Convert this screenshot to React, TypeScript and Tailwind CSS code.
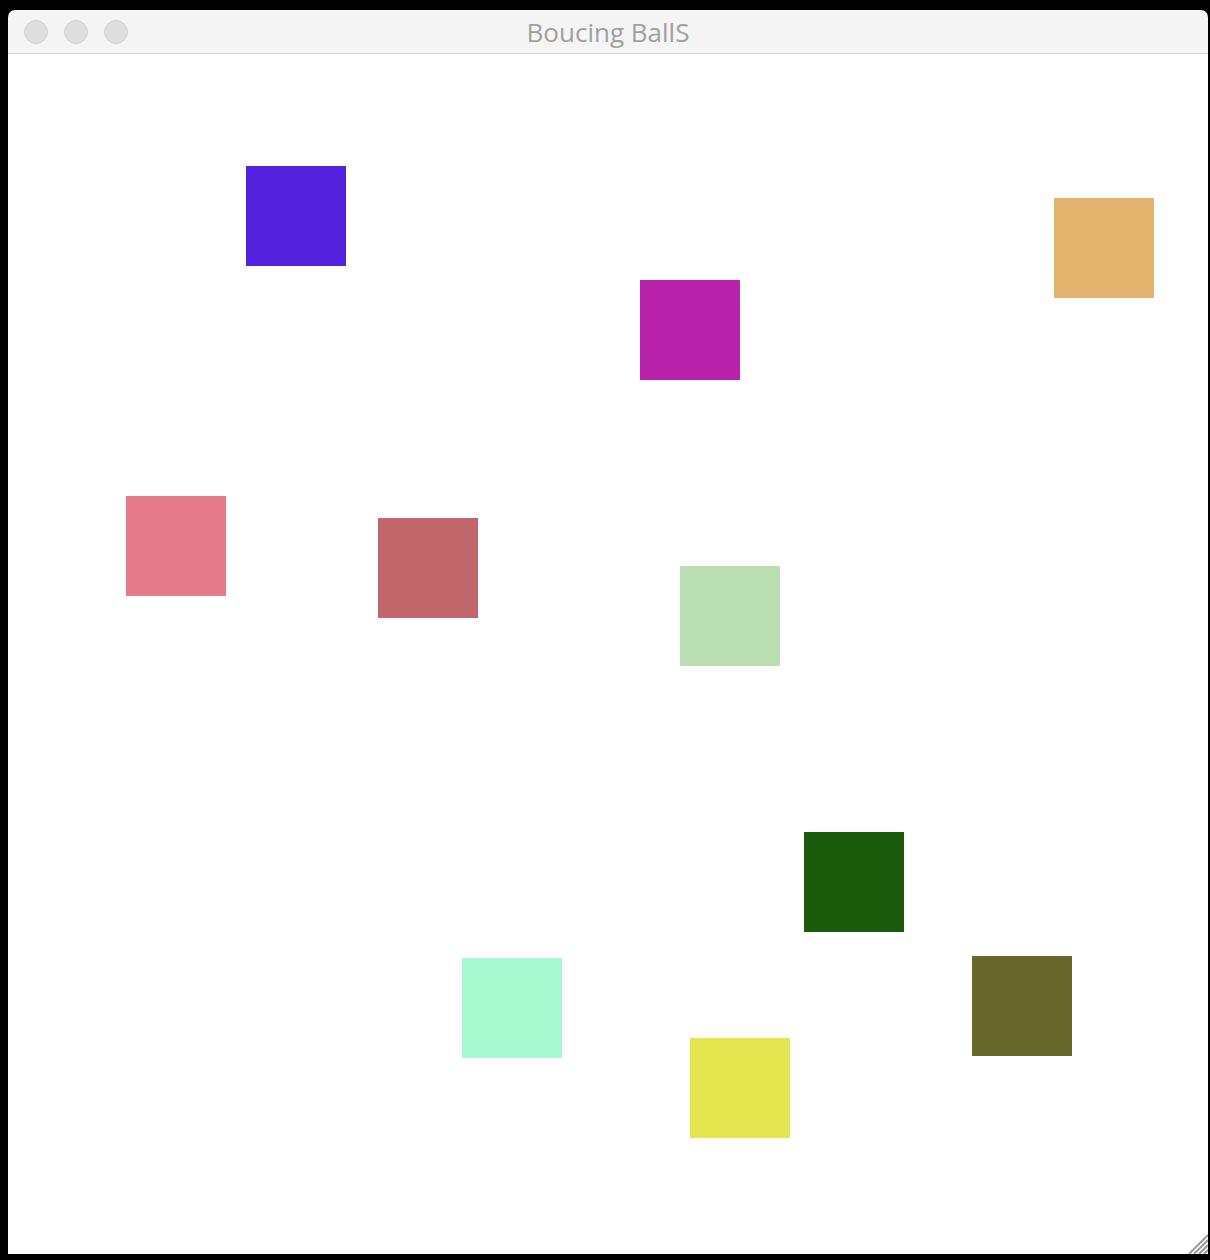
import React from 'react';

type Box = { x: number; y: number; color: string };

// positions inside the 1200x1200 canvas
const boxes: Box[] = [
  { x: 238, y: 112, color: '#5222dc' },
  { x: 632, y: 226, color: '#b922ab' },
  { x: 1046, y: 144, color: '#e4b46f' },
  { x: 118, y: 442, color: '#e57b8a' },
  { x: 370, y: 464, color: '#c1676b' },
  { x: 672, y: 512, color: '#b9deb1' },
  { x: 796, y: 778, color: '#1a5a0b' },
  { x: 454, y: 904, color: '#a6f9cf' },
  { x: 682, y: 984, color: '#e3e64f' },
  { x: 964, y: 902, color: '#66692b' },
];

const TrafficLight: React.FC = () => (
  <div className="w-6 h-6 rounded-full bg-[#dedede] border border-[#d2d2d2]" />
);

const App: React.FC = () => {
  return (
    <div className="w-[1210px] h-[1260px] bg-black pt-[10px] pl-2 overflow-hidden">
      <div className="w-[1200px] flex flex-col">
        <div className="relative h-[44px] bg-[#f5f5f5] rounded-t-[7px] border-b border-[#d6d6d6] flex items-center px-4 gap-4">
          <TrafficLight />
          <TrafficLight />
          <TrafficLight />
          <div
            className="absolute inset-0 flex items-center justify-center text-[26px] text-[#a0a0a0] pt-[1px]"
            style={{ fontFamily: '"Open Sans", "Liberation Sans", sans-serif' }}
          >
            Boucing BallS
          </div>
        </div>
        <div className="relative w-[1200px] h-[1200px] bg-white">
          {boxes.map((b, i) => (
            <div
              key={i}
              className="absolute w-[100px] h-[100px]"
              style={{ left: b.x, top: b.y, backgroundColor: b.color }}
            />
          ))}
          <svg className="absolute right-0 bottom-0" width="22" height="22" viewBox="0 0 22 22">
            <g stroke="#999999" strokeWidth="2">
              <line x1="3" y1="22" x2="22" y2="3" />
              <line x1="8" y1="22" x2="22" y2="8" />
              <line x1="13" y1="22" x2="22" y2="13" />
              <line x1="18" y1="22" x2="22" y2="18" />
            </g>
          </svg>
        </div>
      </div>
    </div>
  );
};

export default App;
